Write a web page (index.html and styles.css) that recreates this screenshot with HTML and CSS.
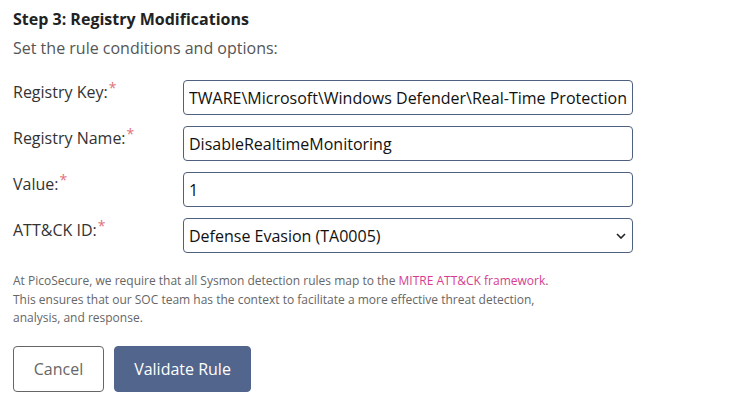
FILE: index.html
```html
<!DOCTYPE html>
<html>
<head>
<meta charset="utf-8">
<link rel="stylesheet" href="styles.css">
</head>
<body>
<div class="page">
  <h2 class="title">Step 3: Registry Modifications</h2>
  <p class="subtitle">Set the rule conditions and options:</p>
  <form class="form">
    <div class="row">
      <label class="label">Registry Key:<span class="req">*</span></label>
      <input class="field" type="text" value="TWARE\Microsoft\Windows Defender\Real-Time Protection">
    </div>
    <div class="row">
      <label class="label">Registry Name:<span class="req">*</span></label>
      <input class="field" type="text" value="DisableRealtimeMonitoring">
    </div>
    <div class="row">
      <label class="label">Value:<span class="req">*</span></label>
      <input class="field" type="text" value="1">
    </div>
    <div class="row">
      <label class="label">ATT&amp;CK ID:<span class="req">*</span></label>
      <div class="select-wrap">
        <select class="field select">
          <option>Defense Evasion (TA0005)</option>
        </select>
        <svg class="chev" width="10" height="6" viewBox="0 0 10 6"><path d="M1 1l4 4 4-4" fill="none" stroke="#222" stroke-width="1.6"/></svg>
      </div>
    </div>
  </form>
  <p class="note">At PicoSecure, we require that all Sysmon detection rules map to the <a class="link" href="#">MITRE ATT&amp;CK framework</a>.<br>This ensures that our SOC team has the context to facilitate a more effective threat detection,<br>analysis, and response.</p>
  <div class="actions">
    <button class="btn btn-cancel" type="button">Cancel</button>
    <button class="btn btn-primary" type="button">Validate Rule</button>
  </div>
</div>
</body>
</html>
```
FILE: styles.css
```css
html, body {
  margin: 0;
  padding: 0;
  background: #fff;
}
body {
  font-family: "Open Sans", sans-serif;
  color: #222;
}
.page {
  padding: 8px 13px 0 13px;
}
.title {
  margin: 0;
  font-size: 16px;
  font-weight: 700;
  line-height: 22px;
  color: #222;
}
.subtitle {
  margin: 6px 0 0 0;
  font-size: 16px;
  line-height: 24px;
  color: #555;
}
.form {
  margin-top: 20px;
  display: flex;
  flex-direction: column;
  gap: 11px;
}
.row {
  display: flex;
  align-items: flex-start;
}
.label {
  width: 170px;
  font-size: 16px;
  line-height: 24px;
  color: #333;
  padding-top: 0;
}
.req {
  color: #e0707a;
  font-size: 14px;
  vertical-align: top;
  position: relative;
  top: -4px;
  margin-left: 1px;
}
.field {
  box-sizing: border-box;
  width: 450px;
  height: 35px;
  border: 1px solid #4f5f7f;
  border-radius: 4px;
  padding: 0 5px;
  font-family: "Open Sans", sans-serif;
  font-size: 16px;
  color: #111;
  background: #fff;
  outline: none;
}
.select-wrap {
  position: relative;
}
.select {
  appearance: none;
  -webkit-appearance: none;
  display: block;
}
.chev {
  position: absolute;
  right: 7px;
  top: 15px;
}
.note {
  margin: 19px 0 0 0;
  font-size: 12px;
  line-height: 18.5px;
  color: #666;
}
.link {
  color: #d63d8f;
  text-decoration: none;
}
.actions {
  margin-top: 18px;
  display: flex;
  gap: 10px;
}
.btn {
  box-sizing: border-box;
  height: 46px;
  border-radius: 4px;
  font-family: "Open Sans", sans-serif;
  font-size: 16px;
  padding: 0 19px;
  cursor: pointer;
}
.btn-cancel {
  width: 91px;
  background: #fff;
  border: 1px solid #666;
  color: #666;
}
.btn-primary {
  width: 137px;
  background: #52658c;
  border: 1px solid #52658c;
  color: #fff;
}
```
